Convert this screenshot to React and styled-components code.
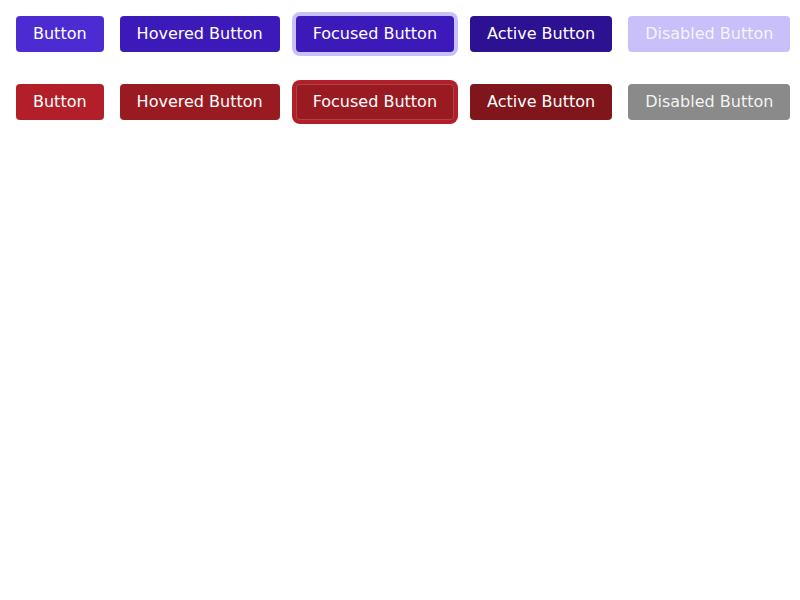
import styled, { createGlobalStyle, css } from "styled-components";

const GlobalStyle = createGlobalStyle`
  body {
    margin: 0;
    background: #fff;
    font-family: "DejaVu Sans", sans-serif;
  }
`;

const palettes = {
  primary: {
    base: "#4d2bd3",
    hover: "#3c19b9",
    active: "#2c1192",
    disabled: "#c9c0f9",
    disabledText: "rgba(255, 255, 255, 0.85)",
    ring: "#c9c0f9",
    inset: "transparent",
  },
  danger: {
    base: "#b21f28",
    hover: "#9a1a22",
    active: "#80161c",
    disabled: "#8a8a8a",
    disabledText: "rgba(255, 255, 255, 0.92)",
    ring: "#b21f28",
    inset: "rgba(255, 255, 255, 0.18)",
  },
};

const Page = styled.div`
  padding: 16px;
  display: flex;
  flex-direction: column;
  gap: 32px;
`;

const Row = styled.div`
  display: flex;
  gap: 16px;
`;

const Button = styled.button`
  height: 36px;
  padding: 0 17px;
  border: none;
  border-radius: 4px;
  font-family: "DejaVu Sans", sans-serif;
  font-size: 16px;
  line-height: 36px;
  color: #fff;
  white-space: nowrap;
  cursor: pointer;
  background: ${({ $tone }) => palettes[$tone].base};

  ${({ $state, $tone }) => {
    const p = palettes[$tone];
    if ($state === "hover") return css`background: ${p.hover};`;
    if ($state === "active") return css`background: ${p.active};`;
    if ($state === "focus")
      return css`
        background: ${p.hover};
        box-shadow: 0 0 0 4px ${p.ring}, inset 0 0 0 1px ${p.inset};
      `;
    return "";
  }}

  &:disabled {
    cursor: default;
    background: ${({ $tone }) => palettes[$tone].disabled};
    color: ${({ $tone }) => palettes[$tone].disabledText};
  }
`;

const ButtonSet = ({ tone }) => (
  <Row>
    <Button $tone={tone}>Button</Button>
    <Button $tone={tone} $state="hover">Hovered Button</Button>
    <Button $tone={tone} $state="focus">Focused Button</Button>
    <Button $tone={tone} $state="active">Active Button</Button>
    <Button $tone={tone} disabled>Disabled Button</Button>
  </Row>
);

export default function App() {
  return (
    <>
      <GlobalStyle />
      <Page>
        <ButtonSet tone="primary" />
        <ButtonSet tone="danger" />
      </Page>
    </>
  );
}
